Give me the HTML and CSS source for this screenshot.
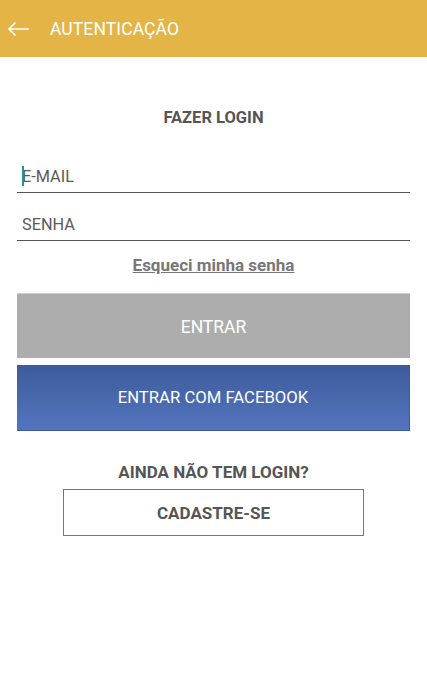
FILE: index.html
```html
<!DOCTYPE html>
<html lang="pt">
<head>
    <meta charset="UTF-8">
    <title>Autenticação</title>
    <link rel="stylesheet" href="styles.css">
</head>
<body>
    <div class="topbar">
        <a href="javascript:;" class="back">
            <svg width="23" height="16" viewBox="0 0 23 16">
                <path d="M22 8H2M8.5 1.5L2 8l6.5 6.5" fill="none" stroke="#fff" stroke-width="1.6"/>
            </svg>
        </a>
        <h1 class="title">AUTENTICAÇÃO</h1>
    </div>
    <div class="content">
        <h2 class="heading">FAZER LOGIN</h2>
        <div class="field field-first">
            <span class="cursor"></span>
            <input type="text" placeholder="E-MAIL">
        </div>
        <div class="field">
            <input type="password" placeholder="SENHA">
        </div>
        <a href="javascript:;" class="forgot">Esqueci minha senha</a>
        <a href="javascript:;" class="btn btn-login">ENTRAR</a>
        <a href="javascript:;" class="btn btn-fb">ENTRAR COM FACEBOOK</a>
        <p class="heading heading-sign">AINDA NÃO TEM LOGIN?</p>
        <a href="javascript:;" class="signup">CADASTRE-SE</a>
    </div>
</body>
</html>
```
FILE: styles.css
```css
*{
    margin: 0;
    padding: 0;
    box-sizing: border-box;
}
body{
    font-family: Roboto, "Liberation Sans", sans-serif;
    background: #fff;
    color: #555;
}
a{
    text-decoration: none;
}
.topbar{
    height: 57px;
    background: #e4b546;
    display: flex;
    align-items: center;
    padding-left: 7px;
}
.back{
    display: flex;
    width: 23px;
    height: 16px;
    margin-top: 1px;
}
.title{
    margin-left: 20px;
    font-size: 17.5px;
    font-weight: 400;
    color: #fff;
    letter-spacing: 0.1px;
}
.content{
    padding: 0 17px;
    display: flex;
    flex-direction: column;
}
.heading{
    margin-top: 51px;
    text-align: center;
    font-size: 16.5px;
    line-height: 20px;
    font-weight: 700;
    color: #555;
}
.field{
    position: relative;
    height: 33px;
    border-bottom: 1px solid #555;
    margin-top: 15px;
}
.field-first{
    margin-top: 32px;
}
.field input{
    width: 100%;
    height: 32px;
    border: none;
    outline: none;
    background: none;
    padding-left: 5px;
    font-family: inherit;
    font-size: 16.3px;
    color: #555;
}
.field input::placeholder{
    color: #5a5a5a;
}
.cursor{
    position: absolute;
    left: 5px;
    top: 6px;
    width: 2px;
    height: 20px;
    background: #17998a;
}
.forgot{
    margin-top: 14px;
    align-self: center;
    font-size: 17px;
    line-height: 20px;
    font-weight: 700;
    color: #777;
    text-decoration: underline;
}
.btn{
    display: flex;
    align-items: center;
    justify-content: center;
    height: 65px;
    font-size: 17.5px;
    color: #fff;
}
.btn-login{
    margin-top: 18px;
    padding-top: 2px;
    background: #adadad;
    border-top: 1px solid #cfcfcf;
}
.btn-fb{
    margin-top: 7px;
    height: 66px;
    font-size: 16.7px;
    background: linear-gradient(#3e5c9b, #5374bf);
    border-right: 1px solid #3c5895;
    border-bottom: 1px solid #3c5895;
}
.heading-sign{
    margin-top: 31px;
    font-size: 17px;
}
.signup{
    margin-top: 7px;
    align-self: center;
    width: 301px;
    height: 47px;
    border: 1px solid #777;
    display: flex;
    align-items: center;
    justify-content: center;
    font-size: 17px;
    font-weight: 700;
    color: #555;
}
```
